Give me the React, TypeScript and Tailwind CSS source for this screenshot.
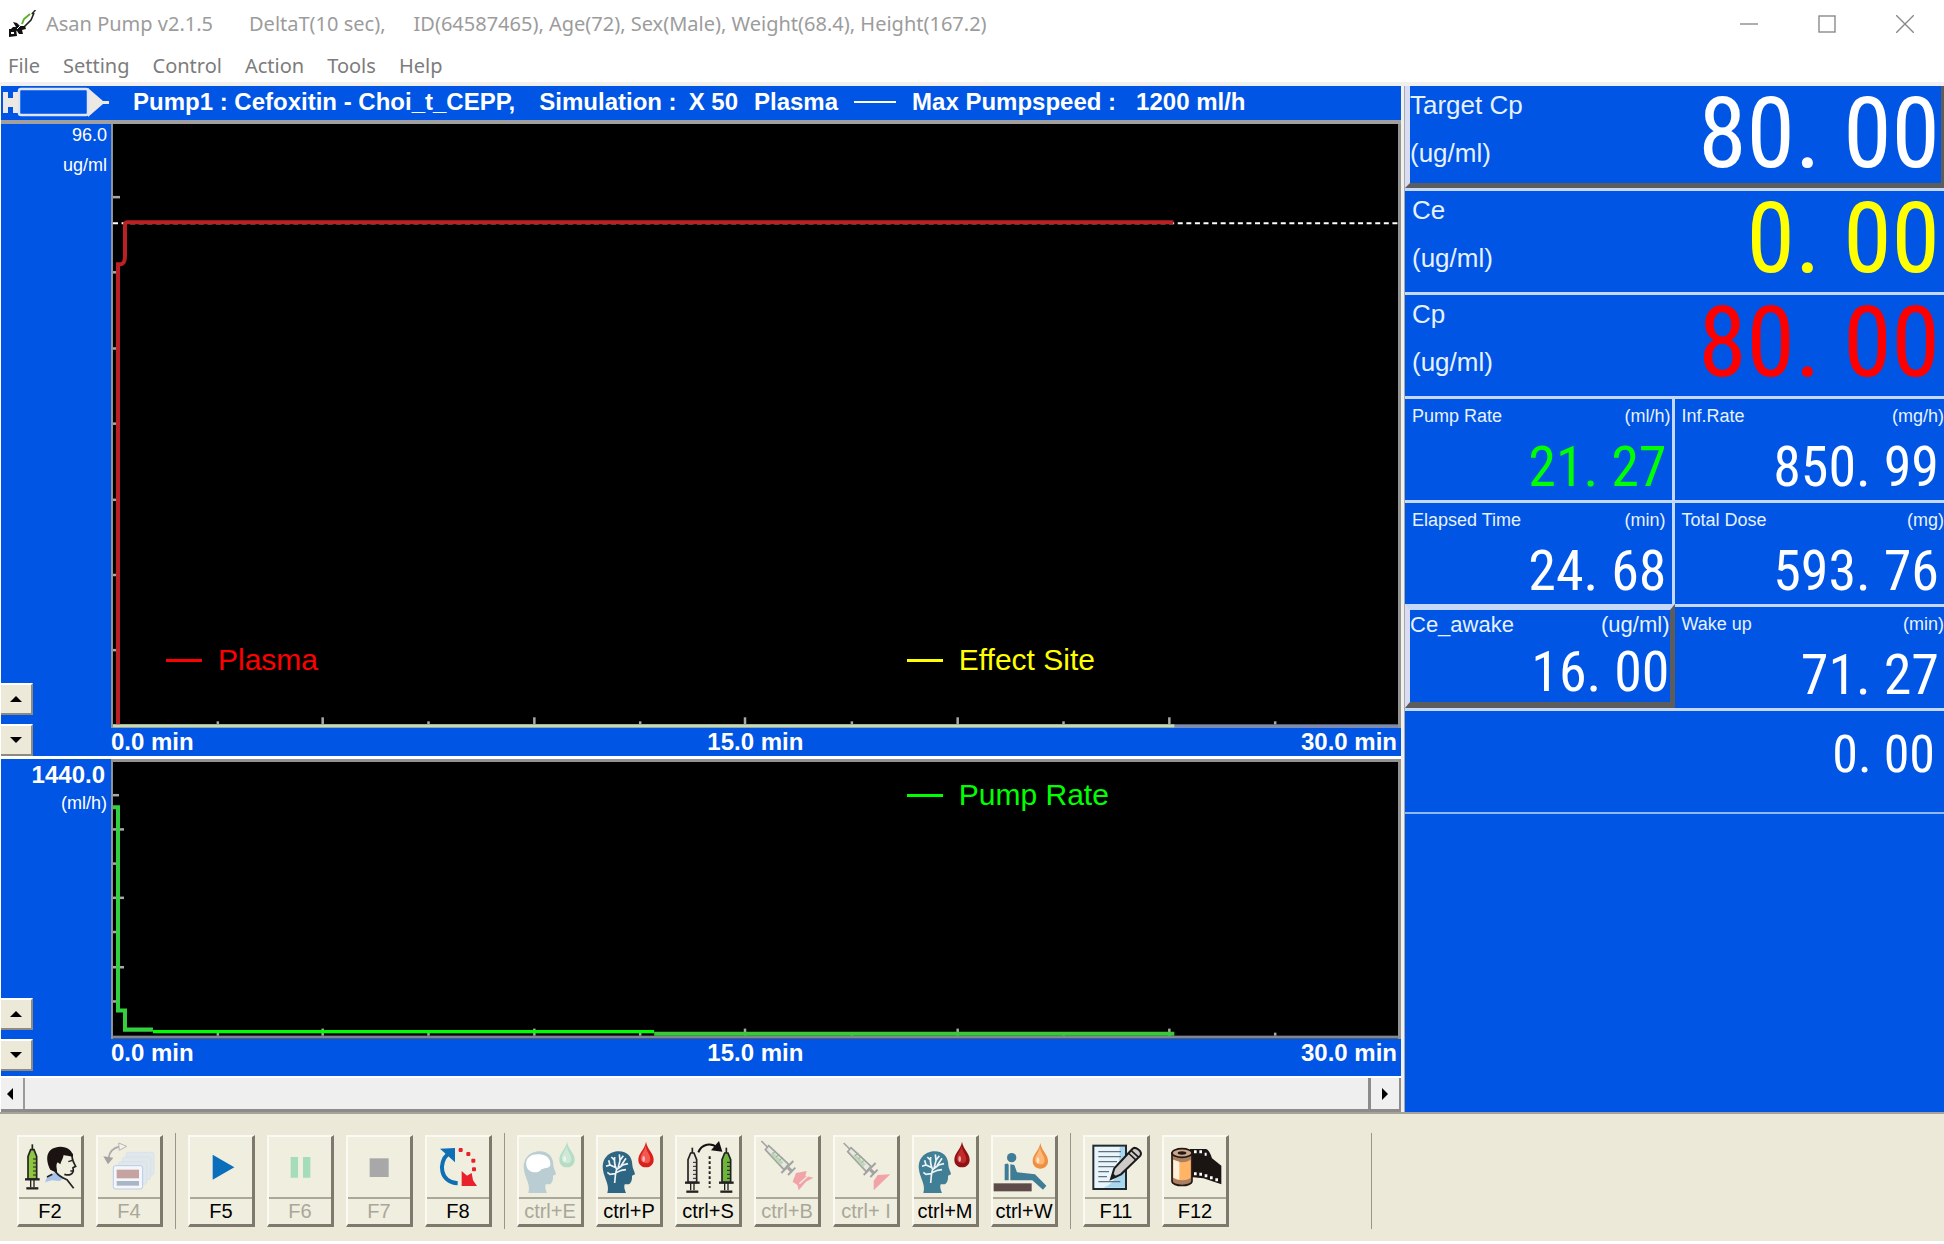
import clsx from "clsx";
import type { ReactNode } from "react";

const sans = "font-['Liberation_Sans',Arial,sans-serif]";
const digits = "font-['Roboto_Condensed','Open_Sans_Condensed','Noto_Sans_CJK_JP',sans-serif]";

const menus = ["File", "Setting", "Control", "Action", "Tools", "Help"];

const AppLogo = () => (
  <svg viewBox="0 0 28 28" className="h-7 w-7">
    <path d="M27.500 0 L20 8" stroke="#222" strokeWidth="1.4" />
    <path d="M23 3 L16 8 L13 14 L16 17 L22 11 L25 6 Z" fill="#fff" />
    <path d="M22 4 L16 9 L14 14" fill="none" stroke="#5fb02f" strokeWidth="2" />
    <path d="M26 3 L23 10 L16 17" fill="none" stroke="#222" strokeWidth="1.6" />
    <path d="M5 12 L9 13 L12 16 L17 16 L18 19 L14 20 L15 24 L11 24 L9 21 L3 19 L5 17 L8 17 Z" fill="#111" />
    <path d="M1 19 H8 L9 26 L1 27 Z" fill="#111" />
    <rect x="3" y="22" width="3" height="2" fill="#fff" />
    <path d="M9 19 L13 15" stroke="#fff" strokeWidth="1" />
  </svg>
);

const TitleBar = () => (
  <header className="flex h-[46px] items-center pt-[2px] pl-2 font-['Noto_Sans',sans-serif] text-xl text-[#9c9c9c]">
    <AppLogo />
    <h1 className="ml-[10px] flex gap-9 whitespace-nowrap leading-6">
      <span>Asan Pump v2.1.5</span>
      <span className="-mr-2">DeltaT(10 sec),</span>
      <span>ID(64587465), Age(72), Sex(Male), Weight(68.4), Height(167.2)</span>
    </h1>
    <div className="ml-auto flex">
      <button aria-label="Minimize" className="flex w-[78px] justify-center">
        <svg viewBox="0 0 18 18" className="h-[18px] w-[18px]" fill="none" stroke="#8a8a8a" strokeWidth="1.4">
          <path d="M0 9 H18" />
        </svg>
      </button>
      <button aria-label="Maximize" className="flex w-[78px] justify-center">
        <svg viewBox="0 0 18 18" className="h-[18px] w-[18px]" fill="none" stroke="#8a8a8a" strokeWidth="1.4">
          <rect x="1" y="1" width="16" height="16" />
        </svg>
      </button>
      <button aria-label="Close" className="flex w-[78px] justify-center">
        <svg viewBox="0 0 18 18" className="h-[18px] w-[18px]" fill="none" stroke="#8a8a8a" strokeWidth="1.4">
          <path d="M0 0 L18 18 M18 0 L0 18" />
        </svg>
      </button>
    </div>
  </header>
);

const MenuBar = () => (
  <nav className="flex h-10 items-center gap-[23px] border-b-4 border-[#f0f0f0] pt-1 pl-2 font-['Noto_Sans',sans-serif] text-xl leading-6 text-[#7c7c7c]">
    {menus.map((menu) => (
      <button key={menu}>{menu}</button>
    ))}
  </nav>
);

const PumpHeader = () => (
  <div className="flex h-[38px] items-center whitespace-nowrap border-b-4 border-[#a0a0a0] pb-[2px] text-2xl font-bold leading-7 text-white">
    <svg viewBox="0 0 106 30" className="mr-6 ml-[2px] h-[30px] w-[106px] shrink-0">
      <path d="M0 5 H5 V11 H10 V5 H16 V26 H10 V20 H5 V26 H0 Z" fill="#ece9e4" />
      <path d="M85 1 L100 14 H106 V17 H100 L85 30 Z" fill="#ece9e4" />
      <rect x="16" y="2" width="69" height="26" rx="2" fill="#0055e5" stroke="#dde4f4" strokeWidth="2.5" />
    </svg>
    <span className="mr-6">Pump1 : Cefoxitin - Choi_t_CEPP,</span>
    <span className="mr-3">Simulation :</span>
    <span className="mr-4">X 50</span>
    <span>Plasma</span>
    <span className="mx-4 h-[2px] w-[42px] bg-white" />
    <span className="mr-5">Max Pumpspeed :</span>
    <span>1200 ml/h</span>
  </div>
);

type ArrowProps = { dir: "up" | "down" | "left" | "right" };

const Arrow = ({ dir }: ArrowProps) => (
  <svg
    viewBox="0 0 12 12"
    className={clsx("h-3 w-3", {
      "rotate-180": dir === "down",
      "-rotate-90": dir === "left",
      "rotate-90": dir === "right",
    })}
  >
    <path d="M6 3 L12 9 H0 Z" fill="#000" />
  </svg>
);

const Spinner = ({ label }: { label: string }) => (
  <div className="mt-auto flex flex-col gap-[9px]">
    <button
      aria-label={`${label} up`}
      className="flex h-8 w-8 items-center justify-center border-t-2 border-r-2 border-b-2 border-t-white border-r-[#8d8a80] border-b-[#8d8a80] bg-[#ece9d8]"
    >
      <Arrow dir="up" />
    </button>
    <button
      aria-label={`${label} down`}
      className="flex h-8 w-8 items-center justify-center border-t-2 border-r-2 border-b-2 border-t-white border-r-[#8d8a80] border-b-[#8d8a80] bg-[#ece9d8]"
    >
      <Arrow dir="down" />
    </button>
  </div>
);

const Legend = ({ color, label }: { color: string; label: string }) => (
  <div className={clsx("flex items-center gap-4 text-[30px] leading-8", color)}>
    <span className="h-[3px] w-9 bg-current" />
    {label}
  </div>
);

const TimeAxis = () => (
  <div className="flex justify-between pr-2 text-2xl font-bold leading-7 text-white">
    <span>0.0 min</span>
    <span className="pl-4">15.0 min</span>
    <span className="-mr-1">30.0 min</span>
  </div>
);

const xTicks = [105, 210, 316, 422, 528, 633, 740, 846, 952, 1058, 1164];

const PlasmaPlot = () => (
  <svg viewBox="0 0 1287 603" preserveAspectRatio="none" className="absolute inset-0 h-full w-full" fill="none">
    <rect y="599" width="1287" height="4" fill="#7d8cae" />
    <rect y="599" width="1063" height="3" fill="#c6dcae" />
    {[73, 148, 224, 299, 375, 450, 525].map((y) => (
      <path key={y} d={`M0 ${y} H7`} stroke="#a8a8a8" strokeWidth="2.5" />
    ))}
    {xTicks.map((x, i) => (
      <path key={x} d={`M${x} 599 V${i % 2 ? 592 : 596}`} stroke="#a8a8a8" strokeWidth="2.5" />
    ))}
    <path d="M0 99 H1287" stroke="#fff" strokeWidth="2" strokeDasharray="5 3.6" />
    <path d="M5 599 V140 H8 Q12 139 12 132 V100 Q12 98 15 98 H1062" stroke="#bb2025" strokeWidth="4" />
  </svg>
);

const RatePlot = () => (
  <svg viewBox="0 0 1287 275" preserveAspectRatio="none" className="absolute inset-0 h-full w-full" fill="none">
    <rect y="272" width="1287" height="3" fill="#7f8694" />
    {[33, 67, 101, 135, 169, 204, 238].map((y, i) => (
      <path key={y} d={`M0 ${y} H${i % 2 ? 11 : 6}`} stroke="#a8a8a8" strokeWidth="2.5" />
    ))}
    {xTicks.map((x, i) => (
      <path key={x} d={`M${x} 272 V${i % 2 ? 265 : 269}`} stroke="#a8a8a8" strokeWidth="2.5" />
    ))}
    <path d="M0 45 H5 V247 H12 V266 H40" stroke="#33d13f" strokeWidth="4" />
    <path d="M40 268 H542" stroke="#00ff00" strokeWidth="3" />
    <path d="M542 270 H1063" stroke="#3bc93b" strokeWidth="4" />
  </svg>
);

const ScrollBar = () => (
  <div className="flex h-[36px] border-t-2 border-b-[3px] border-t-white border-b-[#8c8c8c] bg-[#f0f0f0]">
    <button aria-label="Scroll left" className="flex w-6 items-center justify-center border-r-2 border-[#9a9a9a] pr-1">
      <Arrow dir="left" />
    </button>
    <div className="flex-1 border-r-[3px] border-[#8c8c8c] bg-[#efefef]" />
    <button aria-label="Scroll right" className="flex w-[30px] items-center justify-center border-r-2 border-[#8c8c8c]">
      <Arrow dir="right" />
    </button>
  </div>
);

const Charts = () => (
  <section className="flex flex-col border-r-[3px] border-l border-r-[#f2f0ea] border-l-white">
    <PumpHeader />
    <div className="grid flex-[633] grid-cols-[110px_1fr] text-white">
      <div className="flex flex-col">
        <div className="pr-[4px] text-right text-lg leading-[30px]">
          <p className="-mt-1">96.0</p>
          <p>ug/ml</p>
        </div>
        <Spinner label="Concentration scale" />
      </div>
      <div className="flex flex-col">
        <div className="relative flex flex-1 items-end border-r-[3px] border-l-2 border-[#929292] bg-black">
          <PlasmaPlot />
          <div className="relative mb-[52px] grid w-full grid-cols-[742fr_492fr] pl-[53px]">
            <Legend color="text-[#ff0000]" label="Plasma" />
            <Legend color="text-[#ffff00]" label="Effect Site" />
          </div>
        </div>
        <TimeAxis />
      </div>
    </div>
    <div className="grid flex-[317] grid-cols-[110px_1fr] border-t-[3px] border-white text-white">
      <div className="flex flex-col pb-[5px]">
        <p className="pr-[6px] text-right text-2xl font-bold leading-8">1440.0</p>
        <p className="pr-[4px] text-right text-lg leading-6">(ml/h)</p>
        <Spinner label="Pump rate scale" />
      </div>
      <div className="flex flex-col">
        <div className="relative flex-1 border-t-[3px] border-r-[3px] border-l-2 border-[#929292] bg-black">
          <RatePlot />
          <div className="relative mt-[17px] grid w-full grid-cols-[742fr_492fr] pl-[53px]">
            <span />
            <Legend color="text-[#00ff00]" label="Pump Rate" />
          </div>
        </div>
        <TimeAxis />
        <div className="h-[9px]" />
      </div>
    </div>
    <ScrollBar />
  </section>
);

type BigReadoutProps = { label: string; value: string; color: string };

const BigReadout = ({ label, value, color }: BigReadoutProps) => (
  <div className="flex flex-1 justify-between">
    <div className="flex flex-col gap-4 pt-[3px] text-[26px] leading-8 text-[#e6f2ff]">
      <span>{label}</span>
      <span>(ug/ml)</span>
    </div>
    <span className={clsx("whitespace-pre text-[98px] leading-[96px]", digits, color)}>{value}</span>
  </div>
);

type ReadoutProps = { label: string; unit: string; value: string; color?: string; last?: boolean };

const Readout = ({ label, unit, value, color = "text-white", last = false }: ReadoutProps) => (
  <div
    className={clsx("h-[104px] border-t-[3px] border-[#c5d8f8]", {
      "pl-[7px]": last,
      "border-r-[3px] pl-[7px]": !last,
    })}
  >
    <div className="flex justify-between pt-px text-lg leading-8 text-[#e6f2ff]">
      <span>{label}</span>
      <span className={clsx({ "w-[47px]": !last })}>{unit}</span>
    </div>
    <p className={clsx("pr-[5px] text-right text-[56px] leading-[70px]", digits, color)}>{value}</p>
  </div>
);

const Panel = () => (
  <aside className="flex flex-col border-l border-[#a9a9a9] bg-[#0055e5]">
    <button className="flex h-[102px] border-r-[3px] border-b-[5px] border-l-[5px] border-r-[#5c5c5c] border-b-[#5c5c5c] border-l-[#d8dcf4] pr-[1px] text-left">
      <BigReadout label="Target Cp" value="80. 00" color="text-white" />
    </button>
    <div className="flex h-[104px] border-t-[3px] border-[#c5d8f8] pr-[4px] pl-[7px]">
      <BigReadout label="Ce" value="0. 00" color="text-[#ffff00]" />
    </div>
    <div className="flex h-[104px] border-t-[3px] border-[#c5d8f8] pr-[4px] pl-[7px]">
      <BigReadout label="Cp" value="80. 00" color="text-[#ff0000]" />
    </div>
    <div className="grid grid-cols-2">
      <Readout label="Pump Rate" unit="(ml/h)" value="21. 27" color="text-[#00ff00]" />
      <Readout label="Inf.Rate" unit="(mg/h)" value="850. 99" last />
      <Readout label="Elapsed Time" unit="(min)" value="24. 68" />
      <Readout label="Total Dose" unit="(mg)" value="593. 76" last />
      <button className="flex h-[104px] flex-col border-t-[6px] border-r-[5px] border-b-[6px] border-l-[5px] border-t-[#c5d8f8] border-r-[#5c5c5c] border-b-[#5c5c5c] border-l-[#d8dcf4] text-left">
        <span className="flex w-full justify-between pt-px text-[22px] leading-7 text-[#e6f2ff]">
          <span>Ce_awake</span>
          <span>(ug/ml)</span>
        </span>
        <span className={clsx("w-full text-right text-[56px] leading-[66px] text-white", digits)}>16. 00</span>
      </button>
      <Readout label="Wake up" unit="(min)" value="71. 27" last />
    </div>
    <div className="h-[106px] border-t-[3px] border-b-2 border-t-[#c5d8f8] border-b-[#8fb8f0] pr-[9px]">
      <p className={clsx("text-right text-[52px] leading-[88px] text-white", digits)}>0. 00</p>
    </div>
  </aside>
);

const Drop = ({ from, to }: { from: string; to: string }) => (
  <g>
    <path d="M144 14 C148 38 167 48 167 68 C167 82 157 91 144 91 C131 91 121 82 121 68 C121 48 140 38 144 14 Z" fill={to} />
    <path d="M143 26 C145 44 157 52 157 66 C157 76 150 80 143 78 C134 78 128 72 128 64 C128 52 139 44 143 26 Z" fill={from} />
    <ellipse cx="137" cy="66" rx="4" ry="9" fill="#fff" opacity="0.6" />
  </g>
);

const headPath =
  "M28 168 C36 142 18 124 15 98 C10 62 36 43 62 43 C88 43 103 60 103 84 C103 93 110 103 111 112 L102 116 C103 130 98 143 88 142 L80 142 C77 150 80 160 84 168 Z";

const NerveHead = ({ color }: { color: string }) => (
  <g>
    <path d={headPath} fill={color} />
    <path
      d="M50 138 C52 118 52 106 56 98 L74 84 L90 80 M56 98 C50 86 48 76 50 60 M54 92 L36 84 L24 88 M60 94 L66 70 L64 52 M69 86 L84 64 M36 84 L32 70 M52 110 L36 112 L28 106 M66 70 L76 56 M52 108 L70 100 L84 98 M50 70 L40 60"
      fill="none"
      stroke="#eef4f6"
      strokeWidth="5"
    />
  </g>
);

const UprightSyringe = ({ x, fill }: { x: number; fill: string }) => (
  <g transform={`translate(${x} 0)`} stroke="#222" fill="none">
    <path d="M0 22 V46" strokeWidth="5" />
    <path d="M-5 38 H5 L13 58 V126 H-13 V58 Z" fill={fill} strokeWidth="5" />
    <path d="M2 66 H12 M2 78 H12 M2 90 H12 M2 102 H12 M2 114 H12" strokeWidth="3" />
    <path d="M-22 127 H22" strokeWidth="7" />
    <path d="M-5 128 V150 M5 128 V150" strokeWidth="4" />
    <path d="M-18 154 H18" strokeWidth="7" />
  </g>
);

const SlantedSyringe = () => (
  <g stroke="#a3a3a3" fill="none">
    <path d="M16 12 L34 30" strokeWidth="5" />
    <path d="M38 26 L98 82 L84 98 L28 38 Z" fill="#e6eadc" strokeWidth="5" />
    <path d="M50 44 L82 76 L74 84 L44 52 Z" fill="#bcd8b4" stroke="none" />
    <path d="M60 42 L50 50 M70 52 L60 60 M80 62 L70 70" strokeWidth="3" />
    <path d="M112 72 L76 108" strokeWidth="6" />
    <path d="M96 92 L108 104" strokeWidth="10" />
    <path d="M118 92 L96 114" strokeWidth="6" />
  </g>
);

const PatientIcon = () => (
  <>
    <UprightSyringe x={40} fill="#8fc63f" />
    <path d="M110 100 C104 110 98 114 84 120 L78 136 L98 130 L122 132 L134 124 C124 118 114 110 110 100 Z" fill="#a9c4ea" />
    <path d="M84 120 L100 112 M110 104 C118 116 134 124 144 128 L164 154" fill="none" stroke="#222" strokeWidth="5" />
    <path d="M160 50 C156 66 164 76 170 88 L162 92 L163 102 C160 114 150 116 136 112" fill="none" stroke="#222" strokeWidth="5" />
    <path d="M148 74 L160 70 M154 102 H162" stroke="#222" strokeWidth="4" />
    <path d="M94 98 C80 70 80 40 108 32 C134 24 162 36 162 60 C150 56 140 56 134 54 C132 66 126 72 124 82 L116 76 C108 86 116 98 114 108 Z" fill="#1b1311" />
  </>
);

const WindowsIcon = () => (
  <>
    <g fill="#e0e8ec" stroke="#d3dfe8" strokeWidth="2">
      <rect x="84" y="46" width="84" height="68" rx="6" />
      <rect x="74" y="60" width="84" height="68" rx="6" />
      <rect x="62" y="74" width="84" height="68" rx="6" />
    </g>
    <rect x="46" y="86" width="88" height="70" rx="7" fill="#f4f6fb" stroke="#b6cde8" strokeWidth="3" />
    <rect x="56" y="98" width="67" height="26" fill="#c5a3a0" />
    <rect x="56" y="132" width="67" height="14" fill="#a9b6c4" />
    <path d="M64 29 C42 34 34 46 32 62" fill="none" stroke="#aaa" strokeWidth="5" />
    <path d="M62 18 L86 28 L64 40 Z" fill="#f4f2e6" stroke="#b5b5b5" strokeWidth="3" />
    <path d="M16 58 L46 62 L30 82 Z" fill="#a2a2a2" />
  </>
);

const RestartIcon = () => (
  <>
    <path d="M62 52 C34 76 38 136 92 139" fill="none" stroke="#0f6fb4" strokeWidth="12" />
    <path d="M39 35 L84 33 L84 76 Z" fill="#0f6fb4" />
    <g fill="#e8212c">
      <rect x="95" y="33" width="12" height="12" rx="3" />
      <rect x="118" y="45" width="12" height="12" rx="3" />
      <rect x="133" y="65" width="12" height="12" rx="3" />
      <rect x="135" y="91" width="12" height="12" rx="3" />
      <path d="M104 102 L120 116 L134 108 L138 130 L150 147 L104 147 Z" />
    </g>
  </>
);

const SwapSyringeIcon = () => (
  <>
    <g transform="translate(0 10)">
      <UprightSyringe x={46} fill="#e8e6da" />
      <UprightSyringe x={148} fill="#6fb53c" />
    </g>
    <path d="M64 46 C74 20 104 16 120 32" fill="none" stroke="#111" strokeWidth="6" />
    <path d="M126 12 L136 44 L102 40 Z" fill="#111" />
    <path d="M98 58 V152" stroke="#222" strokeWidth="6" strokeDasharray="8 7" />
  </>
);

const BolusIcon = () => (
  <>
    <SlantedSyringe />
    <path d="M120 108 L152 102 L148 116 L172 122 L150 134 L128 160 L124 144 L110 134 Z" fill="#f2a3a8" />
    <path d="M130 140 L156 116 M142 158 L166 132" stroke="#f0eedf" strokeWidth="4" />
  </>
);

const InfuseIcon = () => (
  <>
    <g transform="translate(10 6)">
      <SlantedSyringe />
    </g>
    <path d="M128 114 L166 112 L116 160 L116 132 Z" fill="#f2a3a8" />
  </>
);

const WakeIcon = () => (
  <>
    <circle cx="56" cy="62" r="14" fill="#3f7c96" />
    <path d="M35 82 Q46 76 47 84 V130 H35 Z" fill="#3f7c96" />
    <path d="M52 82 L64 84 L72 106 L126 112 L160 146 L150 158 L118 130 L52 130 Z" fill="#3f7c96" />
    <rect x="2" y="139" width="114" height="24" fill="#5d4c49" />
    <g transform="translate(-2 4)">
      <Drop from="#fbb878" to="#ef8f3f" />
    </g>
  </>
);

const NotesIcon = () => (
  <>
    <rect x="25" y="26" width="98" height="130" fill="#eaf5fb" stroke="#1f2a33" strokeWidth="6" />
    <path d="M104 30 H120 V152 H54 C96 140 104 96 104 30 Z" fill="#a8d7ef" />
    <path d="M40 44 H108 M40 59 H108 M40 74 H96 M40 89 H88 M40 104 H72 M40 119 H66 M40 134 H106" stroke="#60727e" strokeWidth="4" />
    <path d="M78 126 L88 94 L142 36 C150 26 174 44 166 56 L108 112 Z" fill="#cfcbc9" stroke="#1b1b1b" strokeWidth="6" />
    <path d="M78 126 L83 108 L96 120 Z" fill="#1b1b1b" />
    <path d="M130 48 L154 70 M138 40 L162 62" stroke="#1b1b1b" strokeWidth="5" />
  </>
);

const FilmIcon = () => (
  <>
    <path d="M78 36 L126 36 C136 40 140 52 144 64 L172 86 V142 L118 124 L80 120 Z" fill="#1a1413" />
    <path d="M90 44 H98 M106 44 H114 M122 52 H128 M90 110 H98 M106 112 H114 M122 116 H130 M138 122 H146 M154 128 H162" stroke="#fff" strokeWidth="9" />
    <path d="M24 48 V132 C24 150 84 150 84 132 V48 Z" fill="#a97f62" stroke="#241712" strokeWidth="5" />
    <path d="M28 68 V122 C38 132 70 132 80 122 V68 C66 78 40 78 28 68 Z" fill="#ffb466" />
    <path d="M28 68 V122 L46 128 V74 Z" fill="#fff0dc" />
    <ellipse cx="54" cy="48" rx="30" ry="13" fill="#c9a68c" stroke="#241712" strokeWidth="5" />
    <ellipse cx="54" cy="48" rx="13" ry="5" fill="#241712" />
  </>
);

type Tool = { keys: string; icon: ReactNode; disabled?: boolean };

const toolGroups: Tool[][] = [
  [
    { keys: "F2", icon: <PatientIcon /> },
    { keys: "F4", icon: <WindowsIcon />, disabled: true },
  ],
  [
    { keys: "F5", icon: <path d="M68 53 L133 91 L68 128 Z" fill="#0a6ebd" /> },
    { keys: "F6", icon: <path d="M65 60 H87 V122 H65 Z M102 60 H124 V122 H102 Z" fill="#a5dcb9" />, disabled: true },
    { keys: "F7", icon: <path d="M65 64 H122 V120 H65 Z" fill="#a9a8a9" />, disabled: true },
    { keys: "F8", icon: <RestartIcon /> },
  ],
  [
    {
      keys: "ctrl+E",
      icon: (
        <>
          <path d={headPath} fill="#b9cdd3" />
          <path d="M22 84 C18 58 44 50 60 52 C84 52 96 68 94 84 C90 96 74 92 66 98 C56 112 24 108 22 84 Z" fill="#fff" />
          <Drop from="#cfe9d8" to="#b5dcc5" />
        </>
      ),
      disabled: true,
    },
    {
      keys: "ctrl+P",
      icon: (
        <>
          <NerveHead color="#2d6582" />
          <Drop from="#f25a50" to="#d8201f" />
        </>
      ),
    },
    { keys: "ctrl+S", icon: <SwapSyringeIcon /> },
    { keys: "ctrl+B", icon: <BolusIcon />, disabled: true },
    { keys: "ctrl+ I", icon: <InfuseIcon />, disabled: true },
    {
      keys: "ctrl+M",
      icon: (
        <>
          <NerveHead color="#417f97" />
          <Drop from="#c32a2a" to="#8e1216" />
        </>
      ),
    },
    { keys: "ctrl+W", icon: <WakeIcon /> },
  ],
  [
    { keys: "F11", icon: <NotesIcon /> },
    { keys: "F12", icon: <FilmIcon /> },
  ],
];

const ToolButton = ({ keys, icon, disabled }: Tool) => (
  <button
    disabled={disabled}
    className="flex h-[92px] w-[67px] flex-col border-t-2 border-r-[3px] border-b-[3px] border-l-2 border-t-[#fbfaf2] border-r-[#7d796c] border-b-[#7d796c] border-l-[#fbfaf2] bg-[#f0eedf]"
  >
    <svg viewBox="0 0 186 180" className="h-[60px] w-[62px]">
      {icon}
    </svg>
    <span
      className={clsx("w-full border-t-2 border-[#aba897] text-center text-xl leading-6", {
        "text-[#a9a799]": disabled,
        "text-black": !disabled,
      })}
    >
      {keys}
    </span>
  </button>
);

const Divider = () => <span className="h-24 w-px bg-[#98958a]" />;

const Toolbar = () => (
  <footer className="flex h-[132px] items-center gap-3 border-t-2 border-b-[3px] border-t-[#a5a398] border-b-white bg-[#ece9d8] pt-[7px] pl-[17px]">
    {toolGroups.map((group, i) => (
      <div key={group[0].keys} className="flex items-center gap-3">
        {i > 0 && <Divider />}
        {group.map((tool) => (
          <ToolButton key={tool.keys} {...tool} />
        ))}
      </div>
    ))}
    <div className="flex flex-1 pl-[130px]">
      <Divider />
    </div>
  </footer>
);

const App = () => (
  <div className={clsx("flex min-h-screen flex-col bg-white", sans)}>
    <TitleBar />
    <MenuBar />
    <main className="grid flex-1 grid-cols-[13fr_5fr] bg-[#0055e5]">
      <Charts />
      <Panel />
    </main>
    <Toolbar />
  </div>
);

export default App;
